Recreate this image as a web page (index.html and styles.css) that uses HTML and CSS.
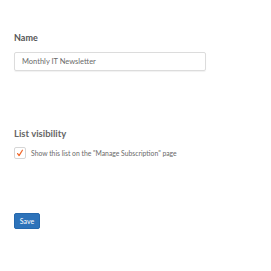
FILE: index.html
```html
<!DOCTYPE html>
<html>
<head>
<meta charset="utf-8">
<link rel="stylesheet" href="styles.css">
</head>
<body>
<form class="form">
  <div class="field">
    <label class="label">Name</label>
    <div class="input">Monthly IT Newsletter</div>
  </div>
  <div class="field visibility">
    <div class="label label-light">List visibility</div>
    <div class="check-row">
      <span class="checkbox">
        <svg width="8" height="8" viewBox="0 0 8 8"><path d="M1.6 4.6 L3.1 6.6 L6.4 1.2" fill="none" stroke="#f0672a" stroke-width="1.2" stroke-linecap="round" stroke-linejoin="round"/></svg>
      </span>
      <span class="check-text">Show this list on the "Manage Subscription" page</span>
    </div>
  </div>
  <div class="actions">
    <button type="button" class="btn">Save</button>
  </div>
</form>
</body>
</html>
```
FILE: styles.css
```css
html, body {
  margin: 0;
  padding: 0;
  background: #fff;
}
body {
  font-family: Lato, "Open Sans", sans-serif;
  color: #555;
}
.form {
  padding: 32px 0 0 14px;
  display: flex;
  flex-direction: column;
}
.field {
  display: flex;
  flex-direction: column;
}
.label {
  font-size: 9px;
  font-weight: 700;
  line-height: 12px;
  color: #555;
  margin-bottom: 8px;
}
.label-light {
  font-size: 9.5px;
  color: #666;
  margin-bottom: 7px;
}
.input {
  width: 192px;
  height: 19px;
  box-sizing: border-box;
  border: 1px solid #dcdcdc;
  border-radius: 2px;
  box-shadow: 0 1px 1px rgba(0,0,0,0.06);
  font-size: 7.5px;
  color: #6a6a6a;
  padding: 0 7px;
  display: flex;
  align-items: center;
}
.visibility {
  margin-top: 57px;
}
.check-row {
  display: flex;
  align-items: center;
  gap: 5px;
}
.checkbox {
  width: 12px;
  height: 12px;
  box-sizing: border-box;
  border: 1px solid #d6d6d6;
  border-radius: 2px;
  display: flex;
  align-items: center;
  justify-content: center;
}
.check-text {
  font-size: 6.8px;
  color: #6a6a6a;
}
.actions {
  margin-top: 49px;
}
.btn {
  width: 26px;
  height: 16px;
  padding: 0;
  border: 1px solid #2568ad;
  border-radius: 2px;
  background: #2d73ba;
  color: #fff;
  font-family: Lato, sans-serif;
  font-size: 7px;
}
```
